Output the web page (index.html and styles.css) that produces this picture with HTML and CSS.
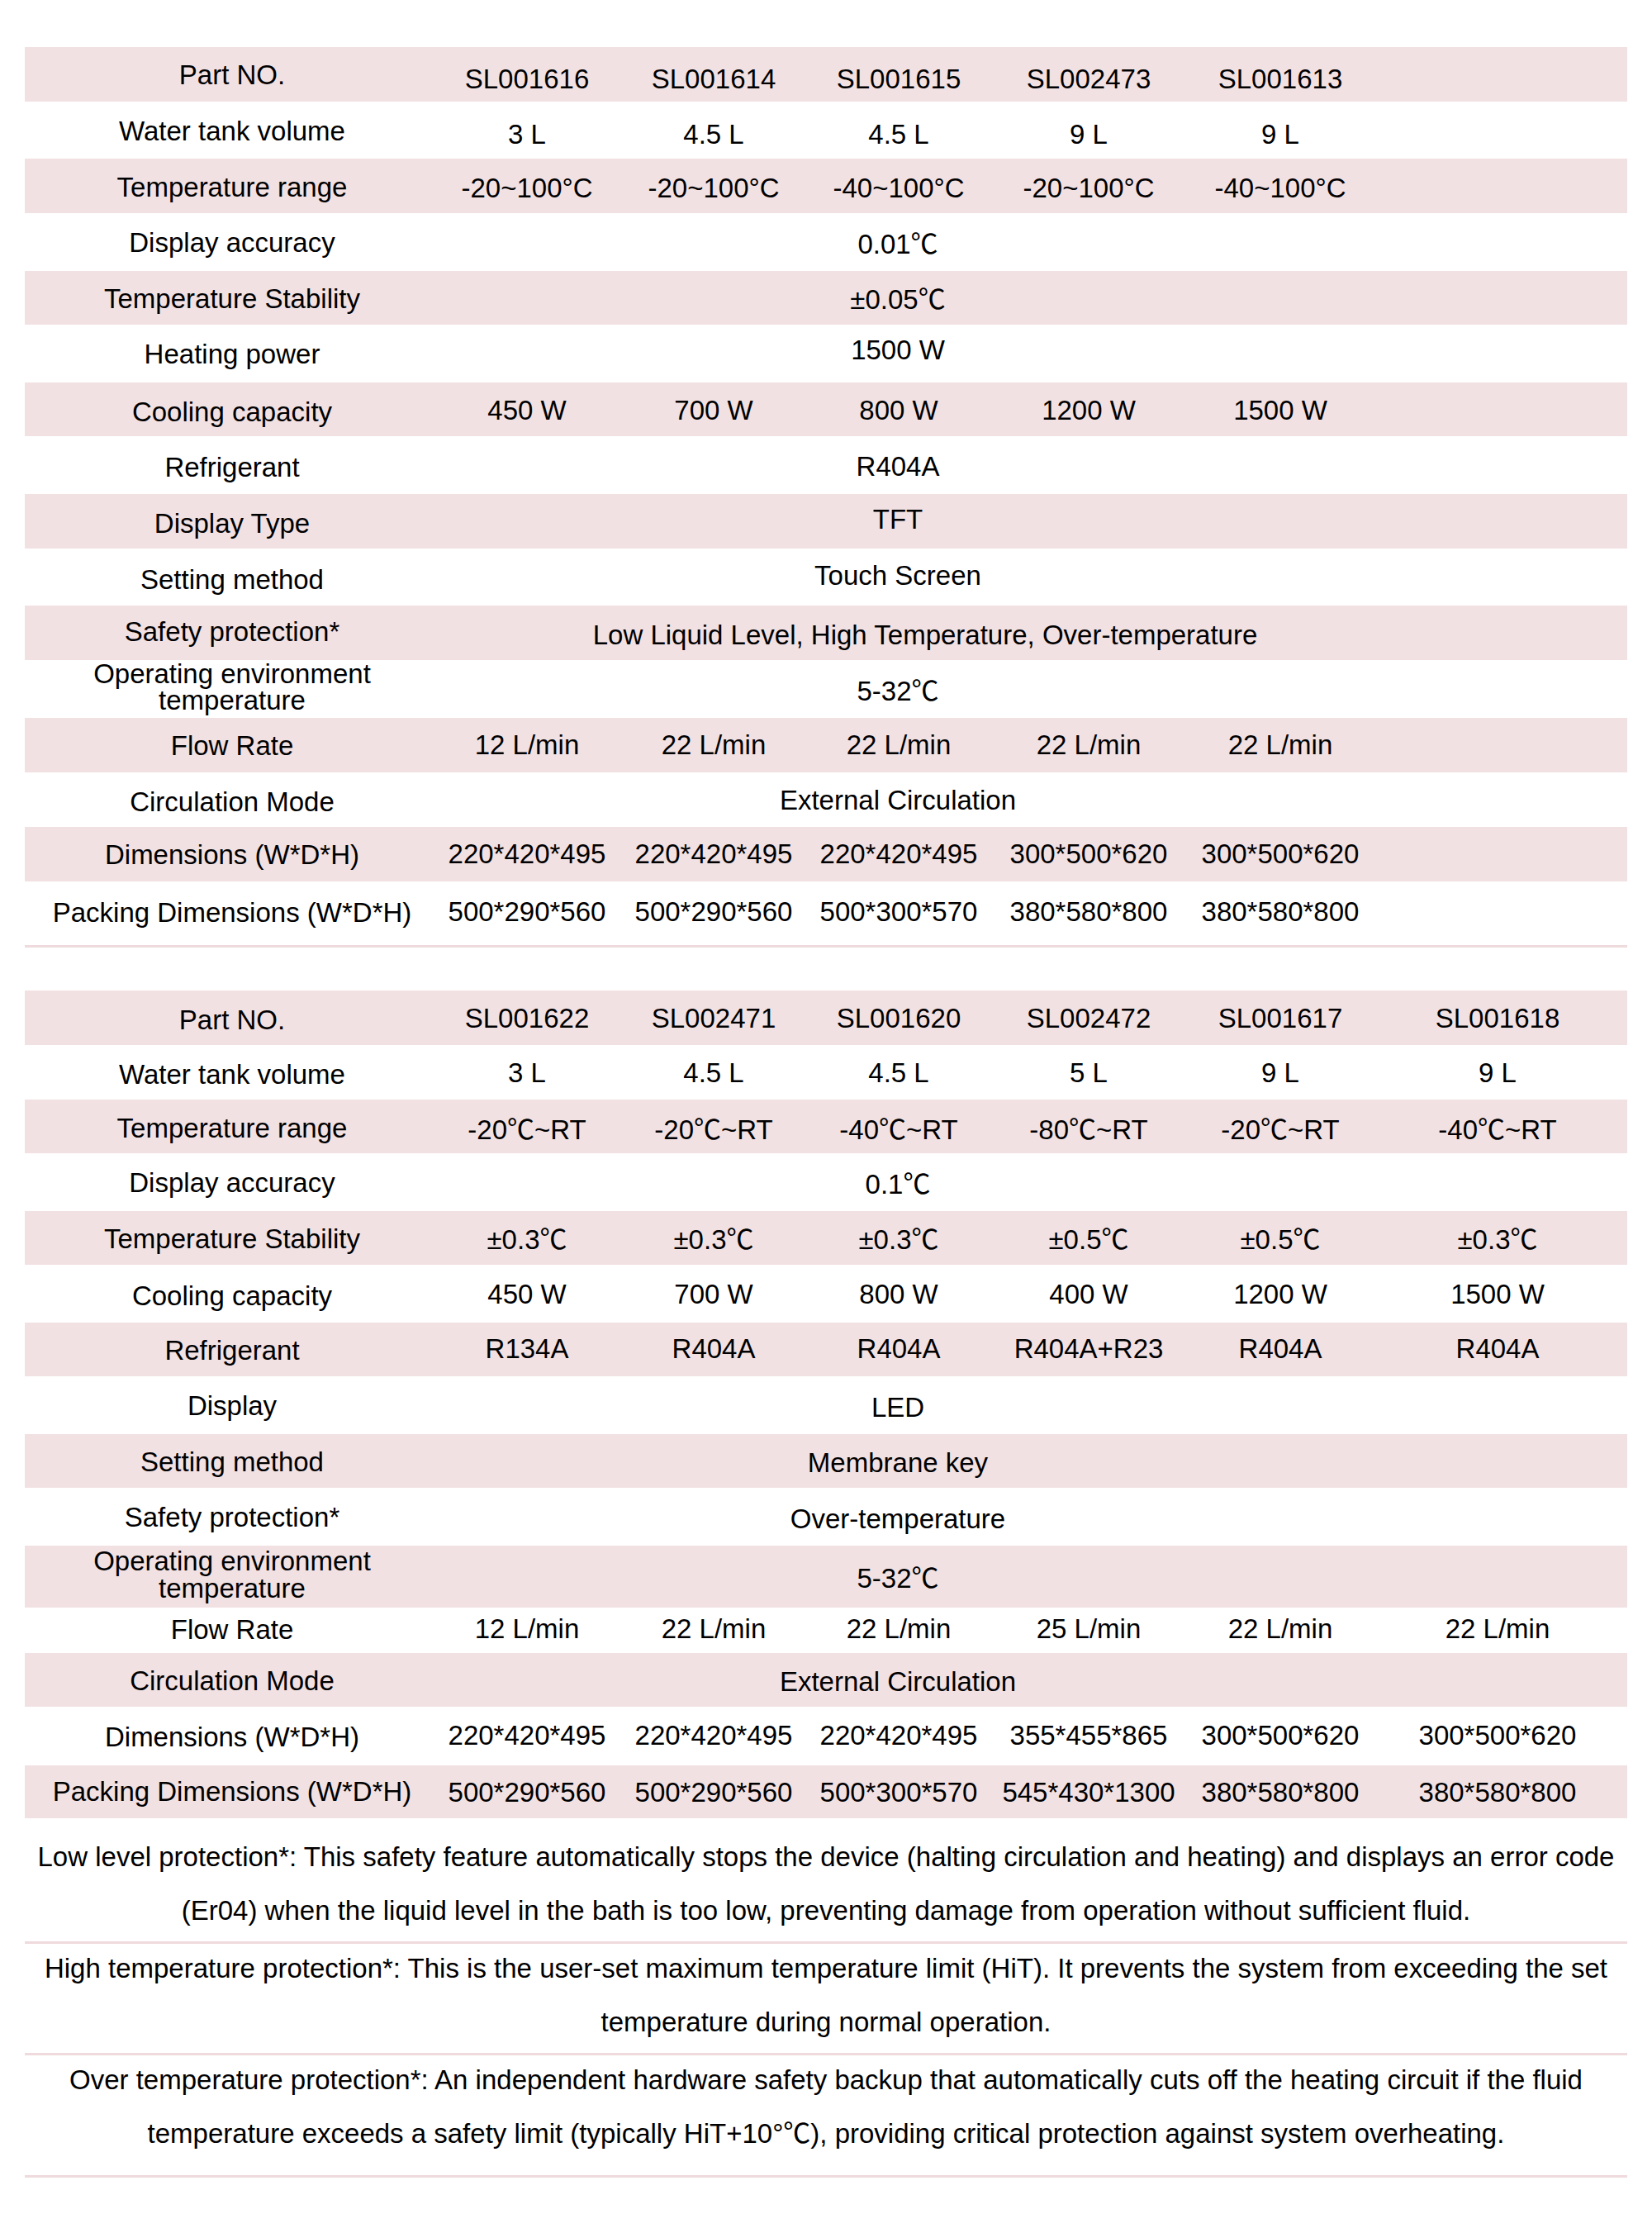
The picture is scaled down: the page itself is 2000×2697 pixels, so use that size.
FILE: index.html
```html
<!DOCTYPE html>
<html lang="en">
<head>
<meta charset="utf-8">
<title>Chiller specifications</title>
<link rel="stylesheet" href="styles.css">
</head>
<body>
<div class="page">
  <section class="spec t1">
    <div class="row pk"><div class="lbl">Part NO.</div><div class="v dn">SL001616</div><div class="v dn">SL001614</div><div class="v dn">SL001615</div><div class="v dn">SL002473</div><div class="v dn">SL001613</div><div class="v"></div></div>
    <div class="row"><div class="lbl">Water tank volume</div><div class="v dn">3 L</div><div class="v dn">4.5 L</div><div class="v dn">4.5 L</div><div class="v dn">9 L</div><div class="v dn">9 L</div><div class="v"></div></div>
    <div class="row pk"><div class="lbl">Temperature range</div><div class="v dn2">-20~100°C</div><div class="v dn2">-20~100°C</div><div class="v dn2">-40~100°C</div><div class="v dn2">-20~100°C</div><div class="v dn2">-40~100°C</div><div class="v"></div></div>
    <div class="row"><div class="lbl">Display accuracy</div><div class="v span">0.01℃</div><div class="v"></div></div>
    <div class="row pk"><div class="lbl">Temperature Stability</div><div class="v span">±0.05℃</div><div class="v"></div></div>
    <div class="row"><div class="lbl">Heating power</div><div class="v span up">1500 W</div><div class="v"></div></div>
    <div class="row pk lo"><div class="lbl">Cooling capacity</div><div class="v">450 W</div><div class="v">700 W</div><div class="v">800 W</div><div class="v">1200 W</div><div class="v">1500 W</div><div class="v"></div></div>
    <div class="row lo"><div class="lbl">Refrigerant</div><div class="v span">R404A</div><div class="v"></div></div>
    <div class="row pk lo"><div class="lbl">Display Type</div><div class="v span up">TFT</div><div class="v"></div></div>
    <div class="row lo"><div class="lbl">Setting method</div><div class="v span up">Touch Screen</div><div class="v"></div></div>
    <div class="row pk"><div class="lbl lbl-up">Safety protection*</div><div class="v span wide dn2">Low Liquid Level, High Temperature, Over-temperature</div><div class="v"></div></div>
    <div class="row"><div class="lbl two">Operating environment<br>temperature</div><div class="v span">5-32℃</div><div class="v"></div></div>
    <div class="row pk h66"><div class="lbl">Flow Rate</div><div class="v">12 L/min</div><div class="v">22 L/min</div><div class="v">22 L/min</div><div class="v">22 L/min</div><div class="v">22 L/min</div><div class="v"></div></div>
    <div class="row h66 lo"><div class="lbl">Circulation Mode</div><div class="v span">External Circulation</div><div class="v"></div></div>
    <div class="row pk h66"><div class="lbl">Dimensions (W*D*H)</div><div class="v">220*420*495</div><div class="v">220*420*495</div><div class="v">220*420*495</div><div class="v">300*500*620</div><div class="v">300*500*620</div><div class="v"></div></div>
    <div class="row h77 hi"><div class="lbl">Packing Dimensions (W*D*H)</div><div class="v">500*290*560</div><div class="v">500*290*560</div><div class="v">500*300*570</div><div class="v">380*580*800</div><div class="v">380*580*800</div><div class="v"></div></div>
  </section>

  <section class="spec t2">
    <div class="row pk h66 lo"><div class="lbl">Part NO.</div><div class="v">SL001622</div><div class="v">SL002471</div><div class="v">SL001620</div><div class="v">SL002472</div><div class="v">SL001617</div><div class="v">SL001618</div></div>
    <div class="row h66 lo"><div class="lbl">Water tank volume</div><div class="v">3 L</div><div class="v">4.5 L</div><div class="v">4.5 L</div><div class="v">5 L</div><div class="v">9 L</div><div class="v">9 L</div></div>
    <div class="row pk h65 lo"><div class="lbl">Temperature range</div><div class="v">-20℃~RT</div><div class="v">-20℃~RT</div><div class="v">-40℃~RT</div><div class="v">-80℃~RT</div><div class="v">-20℃~RT</div><div class="v">-40℃~RT</div></div>
    <div class="row h70"><div class="lbl">Display accuracy</div><div class="v span">0.1℃</div><div class="v"></div></div>
    <div class="row pk h65"><div class="lbl">Temperature Stability</div><div class="v">±0.3℃</div><div class="v">±0.3℃</div><div class="v">±0.3℃</div><div class="v">±0.5℃</div><div class="v">±0.5℃</div><div class="v">±0.3℃</div></div>
    <div class="row h70 lo"><div class="lbl">Cooling capacity</div><div class="v">450 W</div><div class="v">700 W</div><div class="v">800 W</div><div class="v">400 W</div><div class="v">1200 W</div><div class="v">1500 W</div></div>
    <div class="row pk h65"><div class="lbl">Refrigerant</div><div class="v">R134A</div><div class="v">R404A</div><div class="v">R404A</div><div class="v">R404A+R23</div><div class="v">R404A</div><div class="v">R404A</div></div>
    <div class="row h70"><div class="lbl">Display</div><div class="v span dn2">LED</div><div class="v"></div></div>
    <div class="row pk h65"><div class="lbl">Setting method</div><div class="v span dn2">Membrane key</div><div class="v"></div></div>
    <div class="row h70"><div class="lbl">Safety protection*</div><div class="v span dn2">Over-temperature</div><div class="v"></div></div>
    <div class="row pk h75"><div class="lbl two">Operating environment<br>temperature</div><div class="v span">5-32℃</div><div class="v"></div></div>
    <div class="row h55 hi"><div class="lbl">Flow Rate</div><div class="v">12 L/min</div><div class="v">22 L/min</div><div class="v">22 L/min</div><div class="v">25 L/min</div><div class="v">22 L/min</div><div class="v">22 L/min</div></div>
    <div class="row pk h65"><div class="lbl">Circulation Mode</div><div class="v span dn2">External Circulation</div><div class="v"></div></div>
    <div class="row h71"><div class="lbl">Dimensions (W*D*H)</div><div class="v">220*420*495</div><div class="v">220*420*495</div><div class="v">220*420*495</div><div class="v">355*455*865</div><div class="v">300*500*620</div><div class="v">300*500*620</div></div>
    <div class="row pk h64 hi"><div class="lbl">Packing Dimensions (W*D*H)</div><div class="v dn2">500*290*560</div><div class="v dn2">500*290*560</div><div class="v dn2">500*300*570</div><div class="v dn2">545*430*1300</div><div class="v dn2">380*580*800</div><div class="v dn2">380*580*800</div></div>
  </section>

  <section class="notes">
    <p class="note n1">Low level protection*: This safety feature automatically stops the device (halting circulation and heating) and displays an error code (Er04) when the liquid level in the bath is too low, preventing damage from operation without sufficient fluid.</p>
    <p class="note n2">High temperature protection*: This is the user-set maximum temperature limit (HiT). It prevents the system from exceeding the set temperature during normal operation.</p>
    <p class="note n3">Over temperature protection*: An independent hardware safety backup that automatically cuts off the heating circuit if the fluid temperature exceeds a safety limit (typically HiT+10°℃), providing critical protection against system overheating.</p>
  </section>
</div>
</body>
</html>
```

FILE: styles.css
```css
html, body {
  margin: 0;
  padding: 0;
  background: #ffffff;
}

body {
  font-family: "Liberation Sans", Arial, "Noto Sans CJK SC", sans-serif;
  font-size: 33px;
  color: #000000;
}

.page {
  width: 1940px;
  margin-left: 30px;
  padding-top: 57px;
}

.row {
  display: grid;
  grid-template-columns: 502px 212px 240px 208px 252px 212px 314px;
  height: 69.8px;
}

.row > div {
  display: flex;
  align-items: center;
  justify-content: center;
  text-align: center;
  white-space: nowrap;
}

.pk {
  background: #f2e1e3;
  height: 65.5px;
}

.lbl {
  padding-top: 3px;
}

.lbl.lbl-up {
  padding-top: 0;
  padding-bottom: 3px;
}

.lbl.two {
  white-space: normal;
  line-height: 32.7px;
  padding-top: 0;
  padding-bottom: 3px;
}

.span {
  grid-column: 2 / span 5;
  padding-right: 14px;
}

.span.wide {
  padding-left: 52px;
  padding-right: 0;
}

.dn { padding-top: 12px; }
.dn2 { padding-top: 6px; }
.up { padding-bottom: 7px; }

/* whole-row nudges */
.row.lo { padding-top: 3px; box-sizing: border-box; }
.row.hi { padding-bottom: 3px; box-sizing: border-box; }

.h55 { height: 55px; }
.h64 { height: 64px; }
.h65 { height: 65px; }
.h66 { height: 66px; }
.h70 { height: 70px; }
.h71 { height: 71px; }
.h75 { height: 75px; }
.h77 { height: 77px; }

.t1 {
  border-bottom: 3px solid #efdadd;
}

.t2 {
  margin-top: 52px;
}

.notes {
  display: flex;
  flex-direction: column;
}

.note {
  margin: 0;
  line-height: 65px;
  text-align: center;
  border-bottom: 3px solid #efdadd;
}

.n1 {
  padding: 14px 0 5px;
}

.n2 {
  margin-top: -3px;
  padding-bottom: 5px;
}

.n3 {
  margin-top: -3px;
  padding-bottom: 18px;
}
```
